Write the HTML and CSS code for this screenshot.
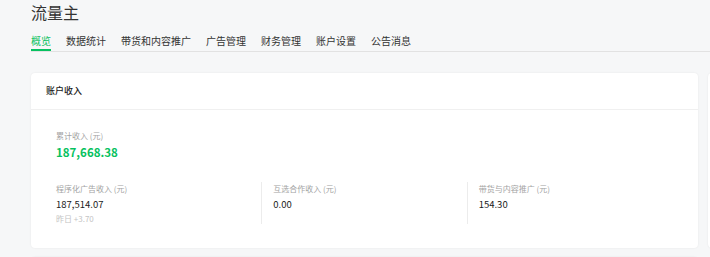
FILE: index.html
```html
<!DOCTYPE html>
<html>
<head>
  <meta charset="utf-8">
  <title>流量主</title>
  <link rel="stylesheet" href="styles.css">
</head>
<body>
  <div class="page">
    <h1 class="title">流量主</h1>
    <div class="tabs">
      <span class="tab active">概览</span>
      <span class="tab">数据统计</span>
      <span class="tab">带货和内容推广</span>
      <span class="tab">广告管理</span>
      <span class="tab">财务管理</span>
      <span class="tab">账户设置</span>
      <span class="tab">公告消息</span>
    </div>

    <div class="cards">
      <div class="card income">
        <div class="card-head">账户收入</div>
        <div class="card-body">
          <div class="label">累计收入 (元)</div>
          <div class="total">187,668.38</div>

          <div class="cols">
            <div class="col">
              <div class="label">程序化广告收入 (元)</div>
              <div class="value">187,514.07</div>
              <div class="sub">昨日 +3.70</div>
            </div>
            <div class="col">
              <div class="label">互选合作收入 (元)</div>
              <div class="value">0.00</div>
            </div>
            <div class="col">
              <div class="label">带货与内容推广 (元)</div>
              <div class="value">154.30</div>
            </div>
          </div>
        </div>
      </div>
      <div class="card side"></div>
    </div>

    <div class="card next"></div>
  </div>
</body>
</html>
```

FILE: styles.css
```css
body {
  margin: 0;
  background: #f6f7f8;
  font-family: "Noto Sans CJK SC", "Noto Sans", sans-serif;
  color: #1a1a1a;
  overflow: hidden;
}
.page {
  padding-left: 31px;
}
.title {
  margin: 0;
  font-size: 16px;
  line-height: 24px;
  font-weight: normal;
  color: #333;
}
.tabs {
  display: flex;
  gap: 15px;
  margin-top: 10px;
  border-bottom: 1px solid #e2e2e2;
}
.tab {
  font-size: 10px;
  line-height: 14px;
  padding-bottom: 1px;
  border-bottom: 2px solid transparent;
  color: #333;
}
.tab.active {
  color: #07c160;
  border-bottom-color: #07c160;
}

.cards {
  display: flex;
  gap: 10px;
  margin-top: 21px;
}
.card {
  background: #fff;
  border-radius: 4px;
  box-shadow: 0 0 2px rgba(0, 0, 0, 0.08);
}
.income {
  width: 667px;
  flex: none;
}
.side {
  width: 200px;
  flex: none;
}
.next {
  width: 667px;
  height: 40px;
  margin-top: 9px;
}
.card-head {
  height: 36px;
  line-height: 36px;
  padding-left: 15px;
  font-size: 9px;
  font-weight: 500;
  border-bottom: 1px solid #f0f0f0;
}
.card-body {
  padding: 19px 26px 24px 25px;
}
.label {
  font-size: 8px;
  line-height: 14px;
  color: #a3a3a3;
}
.total {
  font-size: 11.5px;
  line-height: 18px;
  font-weight: 600;
  color: #07c160;
}
.cols {
  display: grid;
  grid-template-columns: repeat(3, 1fr);
  margin-top: 21px;
}
.col {
  height: 42px;
}
.col + .col {
  border-left: 1px solid #ececec;
  padding-left: 11px;
}
.value {
  font-size: 9.5px;
  line-height: 16px;
}
.sub {
  font-size: 8px;
  line-height: 14px;
  color: #c4c4c4;
}
```
